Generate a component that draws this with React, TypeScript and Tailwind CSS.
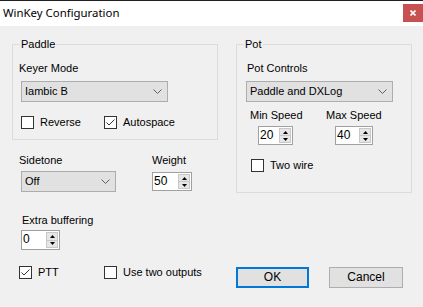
import React from 'react';

const Chevron = () => (
  <svg width="9" height="5" viewBox="0 0 9 5" className="shrink-0">
    <path d="M0.5 0.5 L4.5 4.5 L8.5 0.5" fill="none" stroke="#606060" strokeWidth="1" />
  </svg>
);

const Combo = ({ value, w }: { value: string; w: string }) => (
  <div className={`flex h-[21px] ${w} items-center justify-between border border-[#adadad] bg-[#e1e1e1] pl-[3px] pr-[5px]`}>
    <span className="leading-[13px]">{value}</span>
    <Chevron />
  </div>
);

const Spin = ({ value, w, h = 'h-[19px]' }: { value: string; w: string; h?: string }) => (
  <div className={`flex ${h} ${w} border border-[#a0a0a0] bg-white`}>
    <span className="flex-1 pl-[1px] text-[12px] leading-[17px]">{value}</span>
    <div className="m-[1px] flex w-[12px] flex-col border border-[#c8c8c8] bg-[#e6e6e6]">
      <div className="flex flex-1 items-center justify-center border-b border-[#c8c8c8]">
        <svg width="5" height="3" viewBox="0 0 5 3">
          <path d="M2.5 0 L5 3 L0 3 Z" fill="#000" />
        </svg>
      </div>
      <div className="flex flex-1 items-center justify-center">
        <svg width="5" height="3" viewBox="0 0 5 3">
          <path d="M0 0 L5 0 L2.5 3 Z" fill="#000" />
        </svg>
      </div>
    </div>
  </div>
);

const Check = ({ label, checked = false }: { label: string; checked?: boolean }) => (
  <div className="flex items-center">
    <div className="h-[13px] w-[13px] border border-[#333] bg-white">
      {checked && (
        <svg width="11" height="11" viewBox="0 0 11 11">
          <path d="M1.5 5.5 L4 8 L9.5 2.5" fill="none" stroke="#333" strokeWidth="1" />
        </svg>
      )}
    </div>
    <span className="ml-[6px] leading-[13px]">{label}</span>
  </div>
);

const Group = ({ title, className, children }: { title: string; className: string; children: React.ReactNode }) => (
  <div className={`relative border border-[#dcdcdc] ${className}`}>
    <span className="absolute -top-[7px] left-[7px] bg-[#f0f0f0] px-[1px] leading-[13px]">{title}</span>
    {children}
  </div>
);

export default function App() {
  return (
    <div className="h-[307px] w-[423px] overflow-hidden bg-[#f0f0f0] font-['Liberation_Sans',Arial,sans-serif] text-[11px] text-black">
      <div className="h-[1px] bg-[#202020]" />
      {/* Title bar */}
      <div className="flex h-[25px] items-start justify-between bg-white">
        <span className="pl-[3px] pt-[4px] font-['Noto_Sans',sans-serif] text-[11.4px] leading-[16px]">WinKey Configuration</span>
        <div className="mt-[3px] flex h-[18px] w-[20px] items-center justify-center bg-[#c75050]">
          <svg width="6" height="6" viewBox="0 0 6 6">
            <path d="M0.5 0.5 L5.5 5.5 M5.5 0.5 L0.5 5.5" stroke="#fff" strokeWidth="1.6" />
          </svg>
        </div>
      </div>

      <div className="pl-[12px] pt-[18px]">
        <div className="flex items-start">
          {/* Left column */}
          <div className="w-[206px]">
            <Group title="Paddle" className="h-[96px]">
              <div className="pl-[6px] pt-[17px]">
                <div className="leading-[13px]">Keyer Mode</div>
                <div className="ml-[2px] mt-[6px]">
                  <Combo value="Iambic B" w="w-[147px]" />
                </div>
                <div className="ml-[2px] mt-[14px] flex">
                  <div className="w-[83px]">
                    <Check label="Reverse" />
                  </div>
                  <Check label="Autospace" checked />
                </div>
              </div>
            </Group>

            <div className="flex">
              <div className="ml-[7px] mt-[14px] w-[133px]">
                <div className="leading-[13px]">Sidetone</div>
                <div className="ml-[2px] mt-[4px]">
                  <Combo value="Off" w="w-[95px]" />
                </div>
              </div>
              <div className="mt-[14px]">
                <div className="leading-[13px]">Weight</div>
                <div className="mt-[5px]">
                  <Spin value="50" w="w-[40px]" />
                </div>
              </div>
            </div>

            <div className="mt-[22px]">
              <div className="ml-[10px] leading-[13px]">Extra buffering</div>
              <div className="ml-[9px] mt-[3px]">
                <Spin value="0" w="w-[39px]" h="h-[20px]" />
              </div>
            </div>
          </div>

          {/* Right column */}
          <Group title="Pot" className="ml-[18px] h-[149px] w-[176px]">
            <div className="pl-[9px] pt-[17px]">
              <div className="ml-[1px] leading-[13px]">Pot Controls</div>
              <div className="mt-[6px]">
                <Combo value="Paddle and DXLog" w="w-[147px]" />
              </div>
              <div className="mt-[7px] flex">
                <div className="w-[76px]">
                  <div className="pl-[4px] leading-[13px]">Min Speed</div>
                  <div className="ml-[12px] mt-[4px]">
                    <Spin value="20" w="w-[35px]" />
                  </div>
                </div>
                <div>
                  <div className="pl-[4px] leading-[13px]">Max Speed</div>
                  <div className="ml-[13px] mt-[4px]">
                    <Spin value="40" w="w-[38px]" />
                  </div>
                </div>
              </div>
              <div className="ml-[5px] mt-[14px]">
                <Check label="Two wire" />
              </div>
            </div>
          </Group>
        </div>

        {/* Bottom row */}
        <div className="mt-[16px] flex items-start">
          <div className="ml-[7px] w-[85px]">
            <Check label="PTT" checked />
          </div>
          <div className="w-[132px]">
            <Check label="Use two outputs" />
          </div>
          <button className="mt-[1px] h-[21px] w-[73px] border-2 border-[#0078d7] bg-[#e1e1e1] text-[12px] leading-[17px]">
            OK
          </button>
          <button className="ml-[20px] mt-[1px] h-[21px] w-[74px] border border-[#adadad] bg-[#e1e1e1] text-[12px] leading-[19px]">
            Cancel
          </button>
        </div>
      </div>
    </div>
  );
}
